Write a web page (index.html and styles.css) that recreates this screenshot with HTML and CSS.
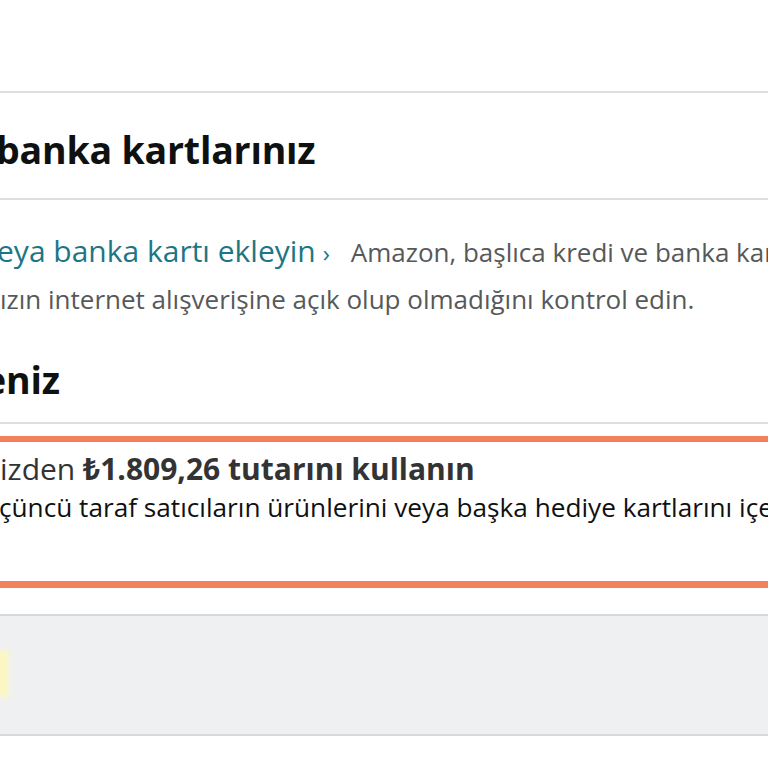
FILE: index.html
```html
<!DOCTYPE html>
<html lang="tr">
<head>
<meta charset="utf-8">
<link rel="stylesheet" href="styles.css">
</head>
<body>
<div class="page">
  <section class="card-head">
    <h2 class="title title-cards">banka kartlarınız</h2>
  </section>
  <section class="add-card">
    <p class="line"><a class="link">eya banka kartı ekleyin</a><span class="chev">›</span> <span class="muted">Amazon, başlıca kredi ve banka kartlarını kabul eder.</span></p>
    <p class="line muted">ızın internet alışverişine açık olup olmadığını kontrol edin.</p>
  </section>
  <section class="gift-head">
    <h2 class="title title-gift">eniz</h2>
  </section>
  <section class="gift-box">
    <p class="gift-main">izden <b>₺1.809,26 tutarını kullanın</b></p>
    <p class="gift-sub">çüncü taraf satıcıların ürünlerini veya başka hediye kartlarını içeren siparişler</p>
  </section>
  <section class="promo">
    <span class="promo-btn"></span>
  </section>
</div>
</body>
</html>
```
FILE: styles.css
```css
html, body {
  margin: 0;
  padding: 0;
  background: #ffffff;
  overflow: hidden;
}
.page {
  width: 768px;
  height: 768px;
  padding-top: 91px;
  box-sizing: border-box;
  font-family: "Open Sans", "Noto Sans", sans-serif;
  color: #0f1111;
  overflow: hidden;
}
p { margin: 0; white-space: nowrap; }
.card-head {
  border-top: 2px solid #dedede;
  border-bottom: 2px solid #dedede;
  height: 105px;
  display: flex;
  align-items: center;
}
.title {
  margin: 0;
  font-size: 37.5px;
  font-weight: 700;
  color: #0f1111;
  white-space: nowrap;
  letter-spacing: -0.2px;
}
.title-cards { margin-left: -4px; margin-top: 8px; }
.add-card {
  padding-top: 28px;
  height: 128px;
  box-sizing: border-box;
}
.line {
  font-size: 26px;
  line-height: 46px;
  color: #565959;
}
.link {
  color: #1d7686;
  font-size: 30px;
  margin-left: -3px;
}
.chev {
  color: #1d7686;
  font-size: 24px;
  margin-left: 7px;
  margin-right: 14px;
}
.muted { color: #565959; }
.gift-head {
  height: 96px;
  border-bottom: 2px solid #dedede;
  display: flex;
  align-items: flex-end;
  padding-bottom: 17px;
  box-sizing: border-box;
}
.title-gift { margin-left: -16px; }
.gift-box {
  margin-top: 12px;
  border-top: 6px solid #f3805d;
  border-bottom: 7px solid #f3805d;
  height: 152px;
  box-sizing: border-box;
  padding-top: 10px;
}
.gift-main {
  font-size: 30px;
  color: #333333;
  line-height: 34px;
}
.gift-main b { font-weight: 700; color: #333333; }
.gift-sub {
  font-size: 26.2px;
  color: #0f1111;
  line-height: 42px;
  margin-left: -1px;
}
.promo {
  margin-top: 26px;
  height: 122px;
  background: #eff0f1;
  border-top: 2px solid #d8d8d8;
  border-bottom: 2px solid #d8d8d8;
  box-sizing: border-box;
  display: flex;
  align-items: center;
}
.promo-btn {
  display: block;
  width: 7px;
  height: 44px;
  background: #fbf7c5;
  box-shadow: 0 0 6px 3px #f6f4dc;
  margin-top: -2px;
}
```
